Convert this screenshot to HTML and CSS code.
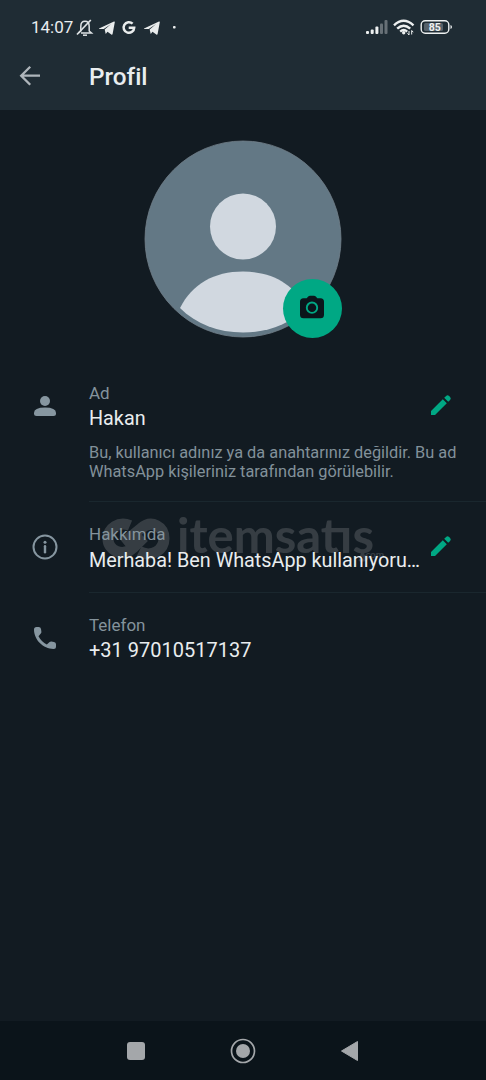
FILE: index.html
```html
<!DOCTYPE html>
<html lang="tr">
<head>
<meta charset="utf-8">
<title>Profil</title>
<link rel="stylesheet" href="styles.css">
</head>
<body>
<div class="screen">
  <header class="top">
    <div class="status">
      <span class="clock">14:07</span>
      <svg class="status-left" width="104" height="20" viewBox="0 0 104 20">
        <g fill="none" stroke="#dfe3e5" stroke-width="1.500"><path d="M2.500 15l2.300-2V8.500c0-3.200 1.500-5.200 4.200-5.200s4.200 2 4.200 5.200V13l2.300 2H5"/><path d="M1 16.500L14.800 2" stroke-width="1.700"/><path d="M7 17.200h4"/></g>
        <g fill="#e9ecec"><path id="plane" d="M23 10.400L38 3.500q1-.2.800.8l-2.200 11.800q-.3 1-1.300.5l-3.800-2.900-1.800 2.200-1-4.300 6.400-5.500-7.400 5-4.700-.1z"/><use href="#plane" x="45"/></g>
        <path d="M56.600 5.700A5.300 5.300 0 1 0 58.200 9.700H52.700" fill="none" stroke="#e9ecec" stroke-width="2.500"/>
        <rect x="97" y="8" width="2.600" height="2.600" rx=".8" fill="#e9ecec"/>
      </svg>
      <svg class="status-right" width="88" height="20" viewBox="0 0 88 20">
        <g fill="#edf0f0"><rect x="1" y="13" width="3" height="3" rx="1"/><rect x="5.700" y="11.500" width="3" height="4.500" rx="1"/><rect x="10.400" y="8.500" width="3" height="7.500" rx="1"/><g opacity=".35"><rect x="15" y="5.500" width="3" height="10.500" rx="1"/><rect x="19.500" y="2" width="3" height="14" rx="1"/></g></g>
        <g fill="none" stroke="#edf0f0" stroke-width="2.400"><path d="M29 7.300q9.500-9 19.500 0M32.200 10.700q6.500-6 13 0M35.200 13.600q3.500-3 7 0"/></g>
        <circle cx="38.700" cy="14.800" r="1.700" fill="#edf0f0"/><path d="M44 17v-4m-1.500 2.300L44 17M46.700 12.500v4m0-4 1.500 1.700" stroke="#edf0f0" fill="none"/>
        <rect x="56.200" y="2.700" width="27.600" height="12.600" rx="4" fill="none" stroke="#edf0f0" stroke-width="1.400"/><rect x="59" y="5" width="19" height="8" rx="1.500" fill="#56616a"/><path d="M85.500 7v4q1.500-.3 1.500-2t-1.500-2" fill="#edf0f0"/>
        <text class="battery" x="69.700" y="12.600" text-anchor="middle">85</text>
      </svg>
    </div>
    <div class="title-bar">
      <svg class="back" width="22" height="22" viewBox="0 0 22 22"><path d="M21 10.700H2.500M11.200 1.700L2.200 10.700l9 9" fill="none" stroke="#aeb5ba" stroke-width="2.300"/></svg>
      <h1>Profil</h1>
    </div>
  </header>
  <main>
    <div class="avatar">
      <svg width="198" height="198" viewBox="0 0 198 198"><circle cx="99" cy="99" r="98" fill="#637885" stroke="#72808a" stroke-width=".8"/><circle cx="99" cy="86.500" r="33" fill="#d1d8e0"/><path d="M36 168C48 144 70 131.500 99 131.500S150 144 162 168C146 184 124 192.500 99 192.500S52 184 36 168z" fill="#d1d8e0"/></svg>
      <span class="camera"><svg width="26" height="26" viewBox="0 0 26 26"><path d="M4.500 4.200h3.200l1.500-1.700q.8-.8 1.800-.8h4q1 0 1.800.8l1.500 1.700h3.200q3.500 0 3.500 3.500v13q0 3.500-3.500 3.500h-17Q1 24.200 1 20.700v-13q0-3.500 3.500-3.500z" fill="#0b151b"/><circle cx="13" cy="13.700" r="5.200" fill="none" stroke="#00a884" stroke-width="1.900"/></svg></span>
    </div>
    <section class="row name">
      <svg class="lead" width="26" height="26" viewBox="0 0 26 26" fill="#8696a0"><circle cx="13" cy="8" r="5"/><path d="M2 20q0-5.500 11-5.500T24 20v.500q0 2.500-2.500 2.500h-17Q2 23 2 20.500z"/></svg>
      <div class="copy"><div class="label">Ad</div><div class="value">Hakan</div><p>Bu, kullanıcı adınız ya da anahtarınız değildir. Bu ad<br>WhatsApp kişileriniz tarafından görülebilir.</p></div>
      <svg class="edit" width="22" height="22" viewBox="0 0 22 22" fill="#00a884"><path d="M1 17L12.800 5.200l4 4L5 21H1zM14.200 3.800l1.900-1.900q1.400-1.400 3 0l1 1q1.400 1.500 0 3l-1.900 1.900z"/></svg>
    </section>
    <section class="row about">
      <svg class="watermark" width="300" height="64" viewBox="0 0 300 64"><path d="M29 15.500C18 11 7 18 7 29s14 19 25 9L43 27" fill="none" stroke="#fff" stroke-width="11"/><path d="M22 33L40 18.500C51 9 63 17 63 28.500S51 48 38 41.500" fill="none" stroke="#fff" stroke-width="11"/><text x="76" y="43" textLength="197" lengthAdjust="spacingAndGlyphs">itemsatış</text><text class="domain" x="262" y="48">.com</text></svg>
      <svg class="lead" width="26" height="26" viewBox="0 0 26 26"><circle cx="13" cy="13" r="11.500" fill="none" stroke="#8696a0" stroke-width="2"/><path d="M13 12.300v6" stroke="#8696a0" stroke-width="2.400" stroke-linecap="round"/><circle cx="13" cy="8.300" r="1.500" fill="#8696a0"/></svg>
      <div class="copy"><div class="label">Hakkımda</div><div class="value">Merhaba! Ben WhatsApp kullanıyoru…</div></div>
      <svg class="edit" width="22" height="22" viewBox="0 0 22 22" fill="#00a884"><path d="M1 17L12.800 5.200l4 4L5 21H1zM14.200 3.800l1.900-1.900q1.400-1.400 3 0l1 1q1.400 1.500 0 3l-1.900 1.900z"/></svg>
    </section>
    <section class="row phone">
      <svg class="lead" width="26" height="26" viewBox="0 0 26 26"><path d="M4.500 2h2.200q2 0 2.300 2l.4 2.800q.1 1-.6 1.700L6.500 11.200q3 5.600 8.300 8.300l2.800-2.500q.7-.6 1.700-.5l2.700.4q2 .3 2 2.300v2.200q0 2.500-2.500 2.500C11.200 23.900 2 14.800 2 4.500Q2 2 4.500 2z" fill="#8696a0"/></svg>
      <div class="copy"><div class="label">Telefon</div><div class="value number">+31 97010517137</div></div>
    </section>
  </main>
  <nav>
    <svg width="26" height="26" viewBox="0 0 26 26"><rect x="4" y="4" width="18" height="18" rx="3" fill="#a4a7aa"/></svg>
    <svg width="26" height="26" viewBox="0 0 26 26"><circle cx="13" cy="13" r="11.500" fill="none" stroke="#a4a7aa" stroke-width="1.700"/><circle cx="13" cy="13" r="7" fill="#a4a7aa"/></svg>
    <svg width="26" height="26" viewBox="0 0 26 26"><path d="M4.500 13L20.500 3.500v19z" fill="#a4a7aa" stroke="#a4a7aa" stroke-linejoin="round"/></svg>
  </nav>
</div>
</body>
</html>
```
FILE: styles.css
```css
* { box-sizing: border-box; }
body { margin: 0; background: #121b22; font-family: Roboto, sans-serif; }
svg { display: block; flex: none; }
.screen { height: 1080px; display: flex; flex-direction: column; overflow: hidden; }
.top { height: 110px; background: #1f2c34; }
.status { height: 52px; display: flex; align-items: center; padding: 2px 33px 0 31px; }
.clock { width: 45px; font-size: 17px; color: #e9edef; white-space: nowrap; }
.status-left { margin-top: 1px; }
.status-right { margin: 1px 0 0 auto; }
.battery { font: 700 10.500px Roboto, sans-serif; fill: #edf0f0; }
.title-bar { height: 48px; display: flex; align-items: center; padding-left: 19px; }
.title-bar h1 { margin: 0 0 0 48px; font-size: 24.300px; font-weight: 500; color: #e9edef; }
main { flex: 1; }
.avatar { position: relative; width: 198px; height: 198px; margin: 30px auto 0; }
.camera { position: absolute; right: 0; bottom: 0; width: 59.500px; height: 59.500px; padding-bottom: 2px; border-radius: 50%; background: #00a884; display: flex; align-items: center; justify-content: center; }
.row { position: relative; display: flex; padding-left: 31.500px; }
.lead { margin: 9.500px 31.500px 0 0; }
.copy { position: relative; flex: 1; white-space: nowrap; }
.label { font-size: 17px; line-height: 20px; color: #84939c; }
.value { margin-top: 3px; font-size: 19.800px; line-height: 26px; color: #e9edef; }
.about .value { margin-top: 4px; }
.number { margin-top: 2px; font-size: 20px; }
.copy p { margin: 11px 0 0; font-size: 16.330px; line-height: 19px; color: #82919a; }
.name { height: 118px; margin-top: 45px; }
.about { height: 91px; padding-top: 23px; }
.phone { height: 90px; padding-top: 23px; }
.about::before, .phone::before { content: ""; position: absolute; left: 89px; right: 0; top: 0; height: 1px; background: #1a272e; }
.edit { position: absolute; left: 430px; top: 11px; }
.about .edit { top: 34px; }
.watermark { position: absolute; left: 101px; top: 9px; opacity: .15; fill: #fff; font: 700 48px Lato, sans-serif; }
.domain { font-size: 10px; }
nav { height: 59px; background: #0b141a; display: flex; align-items: center; justify-content: center; gap: 81px; }
```
